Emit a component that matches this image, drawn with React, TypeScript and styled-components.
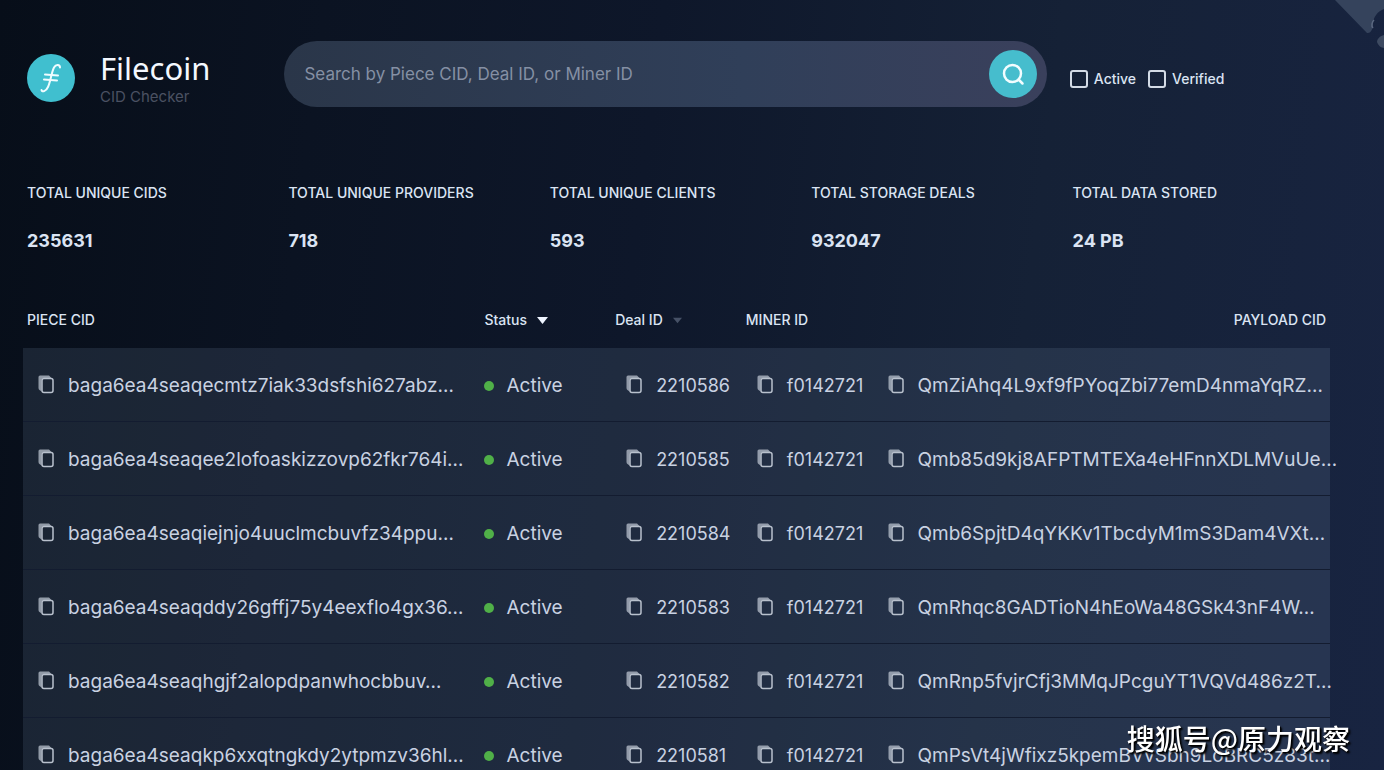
import React from 'react';
import styled, { createGlobalStyle } from 'styled-components';

const GlobalStyle = createGlobalStyle`
  *, *::before, *::after { box-sizing: border-box; }
  body {
    margin: 0;
    background: #0a1120;
    font-family: Inter, "Liberation Sans", "Noto Sans CJK SC", sans-serif;
    color: #dbe4f3;
  }
`;

const Page = styled.main`
  position: relative;
  height: 100vh;
  overflow-x: hidden;
  overflow-y: auto;
  scrollbar-width: none;
  padding: 41px 54px 0 23px;
  background: linear-gradient(97deg, #070e19 0%, #0b1322 22%, #0e172a 45%, #152136 72%, #182441 100%);
`;

const Corner = styled.a`
  position: absolute;
  top: 0;
  right: 0;
  line-height: 0;
`;

const Header = styled.header`
  display: grid;
  grid-template-columns: 12fr 35fr 13fr;
`;

const Brand = styled.div`
  display: flex;
  align-items: center;
  gap: 25px;
  padding: 8px 0 0 4px;
`;

const BrandText = styled.div`
  display: flex;
  flex-direction: column;
`;

const BrandName = styled.h1`
  margin: 0;
  font: 400 31px/38px "Noto Sans", sans-serif;
  color: #f4f8ff;
`;

const BrandSub = styled.span`
  font-size: 15px;
  line-height: 20px;
  color: #4b5162;
`;

const Search = styled.form`
  display: flex;
  align-items: center;
  padding: 0 10px 0 20px;
  border-radius: 33px;
  background: linear-gradient(90deg, #2a3649 0%, #303f59 60%, #3a405c 100%);
`;

const SearchInput = styled.input`
  flex: 1;
  min-width: 0;
  border: 0;
  outline: 0;
  padding: 0;
  background: transparent;
  font: 400 17px/24px Inter, sans-serif;
  color: #dbe4f3;
  &::placeholder { color: #8590a4; opacity: 1; }
`;

const SearchButton = styled.button`
  display: grid;
  place-items: center;
  width: 48px;
  height: 48px;
  padding: 0;
  border: 0;
  border-radius: 50%;
  background: #46bdcd;
  color: #f2fdff;
`;

const Filters = styled.div`
  display: flex;
  align-items: center;
  gap: 12px;
  padding: 9px 0 0 23px;
`;

const Filter = styled.label`
  display: flex;
  align-items: center;
  gap: 6px;
  font-size: 14px;
  line-height: 20px;
  font-weight: 500;
`;

const Checkbox = styled.input`
  appearance: none;
  width: 18px;
  height: 18px;
  margin: 0;
  border: 2px solid #d3dbe6;
  border-radius: 3px;
  &:checked { background: #46bdcd; }
`;

const Stats = styled.dl`
  display: grid;
  grid-template-columns: repeat(5, 1fr);
  margin: 76px 0 0;
`;

const Stat = styled.div`
  padding-left: 4px;
`;

const StatLabel = styled.dt`
  font-size: 14px;
  line-height: 20px;
  font-weight: 500;
`;

const StatValue = styled.dd`
  margin: 24px 0 0;
  font-size: 18px;
  line-height: 28px;
  font-weight: 700;
`;

const Table = styled.table`
  width: 100%;
  margin-top: 43px;
  table-layout: fixed;
  border-collapse: collapse;
`;

const HeadCell = styled.th<{ $width: string; $end?: boolean }>`
  width: ${(p) => p.$width};
  height: 50px;
  padding: 0 4px 6px;
  text-align: ${(p) => (p.$end ? 'right' : 'left')};
  font-size: 14px;
  line-height: 20px;
  font-weight: 500;
  white-space: nowrap;
`;

const SortButton = styled.button`
  display: flex;
  align-items: center;
  gap: 10px;
  padding: 0;
  border: 0;
  background: none;
  font: inherit;
  color: inherit;
`;

const Body = styled.tbody`
  background: rgba(120, 142, 172, 0.17);
`;

const Row = styled.tr`
  box-shadow: inset 0 -1px #131c30;
`;

const Cell = styled.td`
  height: 74px;
  padding: 0;
`;

const CellInner = styled.div<{ $status?: boolean; $small?: boolean }>`
  display: flex;
  align-items: center;
  gap: ${(p) => (p.$status ? 12 : 14)}px;
  padding-top: 2px;
  padding-left: ${(p) => (p.$status ? 4 : 15)}px;
  font-size: ${(p) => (p.$small ? 18 : 19)}px;
  line-height: 28px;
  white-space: nowrap;
  color: #c9d2e2;
`;

const Dot = styled.span`
  width: 10px;
  height: 10px;
  border-radius: 50%;
  background: #50b048;
`;

const CopyButton = styled.button`
  padding: 0 0 4px;
  border: 0;
  background: none;
  line-height: 0;
  color: #b9c1cd;
`;

const Watermark = styled.div`
  position: fixed;
  right: 34px;
  bottom: 14px;
  font: 500 28px/36px "Noto Sans CJK SC", sans-serif;
  color: #fff;
  text-shadow: 1px 1px 1px #000, 2px 2px 2px #000;
`;

const Logo = () => (
  <svg width="48" height="48" viewBox="0 0 48 48" aria-hidden="true">
    <circle cx="24" cy="24" r="24" fill="#40bfcf" />
    <g fill="none" stroke="#effcff" strokeWidth="2" strokeLinecap="round">
      <path d="M33 13.500C33 10.500 29 10 27 13.500C24.500 18 23.500 28 21 33C19 37.500 15 38.500 14.500 36" />
      <path d="M18 20.500L31 21.500M17 25.500L30 26.500" />
    </g>
  </svg>
);

const CopyIcon = () => (
  <svg width="16" height="19" viewBox="0 0 16 19" fill="none" aria-hidden="true">
    <path d="M0.500 2Q0.500 0.500 2 0.500H11L13.500 3H5.500Q3.500 3 3.500 5V16.500L1.500 15Q0.500 14.500 0.500 13Z" fill="currentColor" opacity="0.750" />
    <rect x="4" y="3.500" width="11" height="14" rx="2" stroke="currentColor" strokeWidth="1.500" />
  </svg>
);

const Caret = ({ color, size }: { color: string; size: number }) => (
  <svg width={size} height="7" viewBox="0 0 11 7" aria-hidden="true">
    <path d="M0 0H11L5.500 7Z" fill={color} />
  </svg>
);

const Copyable = ({ text, small }: { text: string; small?: boolean }) => (
  <Cell>
    <CellInner $small={small}>
      <CopyButton type="button" aria-label={`Copy ${text}`}>
        <CopyIcon />
      </CopyButton>
      {text}
    </CellInner>
  </Cell>
);

const stats = [
  ['TOTAL UNIQUE CIDS', '235631'],
  ['TOTAL UNIQUE PROVIDERS', '718'],
  ['TOTAL UNIQUE CLIENTS', '593'],
  ['TOTAL STORAGE DEALS', '932047'],
  ['TOTAL DATA STORED', '24 PB'],
];

const deals = [
  { piece: 'baga6ea4seaqecmtz7iak33dsfshi627abz…', deal: '2210586', payload: 'QmZiAhq4L9xf9fPYoqZbi77emD4nmaYqRZ…' },
  { piece: 'baga6ea4seaqee2lofoaskizzovp62fkr764i…', deal: '2210585', payload: 'Qmb85d9kj8AFPTMTEXa4eHFnnXDLMVuUe…' },
  { piece: 'baga6ea4seaqiejnjo4uuclmcbuvfz34ppu…', deal: '2210584', payload: 'Qmb6SpjtD4qYKKv1TbcdyM1mS3Dam4VXt…' },
  { piece: 'baga6ea4seaqddy26gffj75y4eexflo4gx36…', deal: '2210583', payload: 'QmRhqc8GADTioN4hEoWa48GSk43nF4W…' },
  { piece: 'baga6ea4seaqhgjf2alopdpanwhocbbuv…', deal: '2210582', payload: 'QmRnp5fvjrCfj3MMqJPcguYT1VQVd486z2T…' },
  { piece: 'baga6ea4seaqkp6xxqtngkdy2ytpmzv36hl…', deal: '2210581', payload: 'QmPsVt4jWfixz5kpemBVvSbn9LoBRC5z83t…' },
];

export default function App() {
  return (
    <>
      <GlobalStyle />
      <Page>
        <Corner href="#source" aria-label="View source">
          <svg width="49" height="48" viewBox="0 0 49 48" aria-hidden="true">
            <path d="M0 0H49V9C43 11 38 17 38 24C38 28 36 34 32 33Z" fill="#35435c" />
            <path d="M38 28C36 26 37 22 39 20" stroke="#5b6880" strokeWidth="1.500" fill="none" />
            <path d="M49 35C45 36 42 39 42 42C43 45 46 48 49 48Z" fill="#3d4a61" />
          </svg>
        </Corner>
        <Header>
          <Brand>
            <Logo />
            <BrandText>
              <BrandName>Filecoin</BrandName>
              <BrandSub>CID Checker</BrandSub>
            </BrandText>
          </Brand>
          <Search role="search" onSubmit={(e) => e.preventDefault()}>
            <SearchInput
              type="text"
              aria-label="Search"
              placeholder="Search by Piece CID, Deal ID, or Miner ID"
            />
            <SearchButton type="submit" aria-label="Search">
              <svg width="24" height="24" viewBox="0 0 24 24" fill="none" stroke="currentColor" strokeWidth="2.500" aria-hidden="true">
                <circle cx="11.500" cy="11.500" r="8.500" />
                <path d="M17.500 17.500L21.500 21.500" strokeLinecap="round" />
              </svg>
            </SearchButton>
          </Search>
          <Filters>
            <Filter>
              <Checkbox type="checkbox" />
              Active
            </Filter>
            <Filter>
              <Checkbox type="checkbox" />
              Verified
            </Filter>
          </Filters>
        </Header>
        <Stats>
          {stats.map(([label, value]) => (
            <Stat key={label}>
              <StatLabel>{label}</StatLabel>
              <StatValue>{value}</StatValue>
            </Stat>
          ))}
        </Stats>
        <Table>
          <thead>
            <tr>
              <HeadCell $width="35%">PIECE CID</HeadCell>
              <HeadCell $width="10%">
                <SortButton type="button">
                  Status <Caret color="#eef4ff" size={11} />
                </SortButton>
              </HeadCell>
              <HeadCell $width="10%">
                <SortButton type="button">
                  Deal ID <Caret color="#465166" size={9} />
                </SortButton>
              </HeadCell>
              <HeadCell $width="10%">MINER ID</HeadCell>
              <HeadCell $width="35%" $end>PAYLOAD CID</HeadCell>
            </tr>
          </thead>
          <Body>
            {deals.map((d) => (
              <Row key={d.deal}>
                <Copyable text={d.piece} />
                <Cell>
                  <CellInner $status>
                    <Dot />
                    Active
                  </CellInner>
                </Cell>
                <Copyable text={d.deal} small />
                <Copyable text="f0142721" small />
                <Copyable text={d.payload} />
              </Row>
            ))}
          </Body>
        </Table>
        <Watermark>搜狐号@原力观察</Watermark>
      </Page>
    </>
  );
}
